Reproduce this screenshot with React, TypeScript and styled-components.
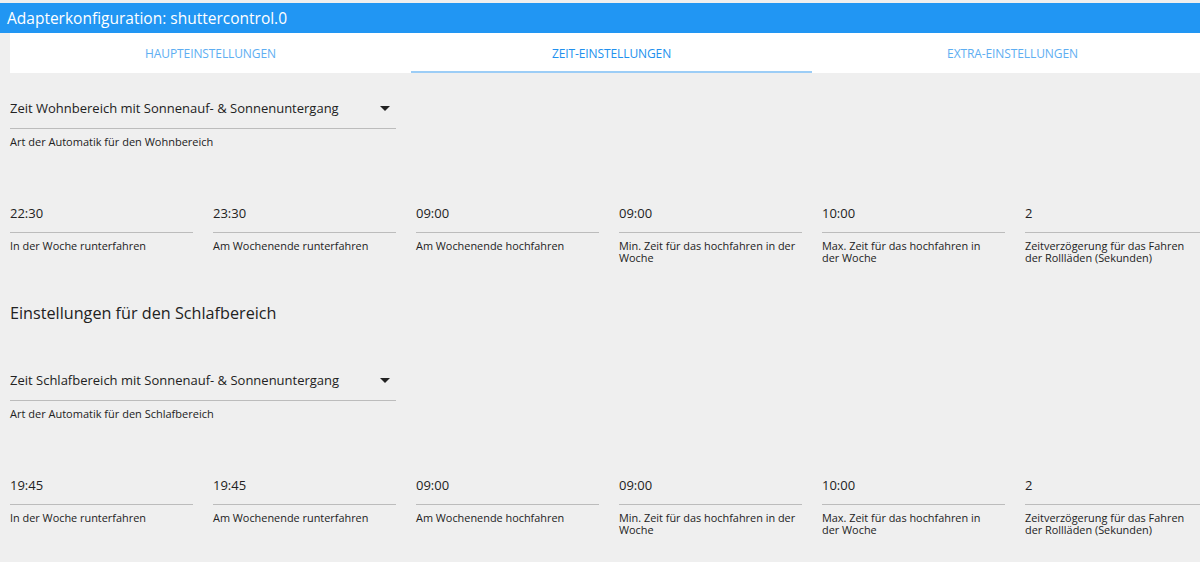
import React from 'react';
import styled, { createGlobalStyle } from 'styled-components';

const GlobalStyle = createGlobalStyle`
  html, body {
    margin: 0;
    padding: 0;
    background: #efefef;
    overflow: hidden;
    font-family: "Open Sans", "Noto Sans", Arial, sans-serif;
    color: rgba(0, 0, 0, 0.87);
  }
`;

const Page = styled.div`
  width: 1200px;
  height: 562px;
  padding-top: 3px;
  box-sizing: border-box;
  overflow: hidden;
`;

const Header = styled.div`
  height: 30px;
  background: #2196f3;
  color: #fff;
  font-size: 15.5px;
  line-height: 30px;
  padding-left: 7px;
  white-space: nowrap;
`;

const TabBar = styled.div`
  display: flex;
  margin-left: 10px;
  width: 1203px;
  height: 40px;
  background: #fff;
`;

const Tab = styled.div<{ active?: boolean }>`
  flex: 0 0 401px;
  display: flex;
  align-items: center;
  justify-content: center;
  box-sizing: border-box;
  font-size: 12px;
  letter-spacing: -0.1px;
  text-transform: uppercase;
  color: ${p => (p.active ? '#2190ee' : '#5eaef2')};
  border-bottom: 2px solid ${p => (p.active ? '#9ccdf6' : 'transparent')};
  padding-top: 2px;
`;

const Content = styled.div`
  padding-left: 10px;
`;

const SelectBlock = styled.div<{ top: number }>`
  width: 386px;
  margin-top: ${p => p.top}px;
`;

const SelectBox = styled.div`
  display: flex;
  align-items: center;
  justify-content: space-between;
  height: 24px;
  padding-bottom: 8px;
  border-bottom: 1px solid #bcbcbc;
  font-size: 13px;
  line-height: 24px;
  color: #222;
`;

const Arrow = styled.svg`
  width: 24px;
  height: 24px;
  margin-right: -1px;
  fill: #222;
`;

const Helper = styled.div`
  margin-top: 6px;
  font-size: 11px;
  line-height: 14px;
  color: #222;
`;

const FieldRow = styled.div`
  display: grid;
  grid-template-columns: repeat(6, 183px);
  column-gap: 20px;
  margin-top: 55px;
`;

const Field = styled.div``;

const Value = styled.div`
  height: 20px;
  line-height: 20px;
  padding-bottom: 9px;
  border-bottom: 1px solid #bcbcbc;
  font-size: 13px;
  color: #222;
  margin-top: -1px;
`;

const Label = styled.div`
  margin-top: 7px;
  font-size: 10.9px;
  line-height: 12px;
  color: #222;
  white-space: pre-line;
`;

const Heading = styled.div`
  margin-top: 37px;
  font-size: 16.2px;
  line-height: 24px;
  color: #222;
`;

type Item = { value: string; label: string };

const labels = [
  'In der Woche runterfahren',
  'Am Wochenende runterfahren',
  'Am Wochenende hochfahren',
  'Min. Zeit für das hochfahren in der\nWoche',
  'Max. Zeit für das hochfahren in\nder Woche',
  'Zeitverzögerung für das Fahren\nder Rollläden (Sekunden)',
];

const wohnFields: Item[] = ['22:30', '23:30', '09:00', '09:00', '10:00', '2'].map((value, i) => ({
  value,
  label: labels[i],
}));

const schlafFields: Item[] = ['19:45', '19:45', '09:00', '09:00', '10:00', '2'].map((value, i) => ({
  value,
  label: labels[i],
}));

const SelectField: React.FC<{ text: string; helper: string; top: number }> = ({ text, helper, top }) => (
  <SelectBlock top={top}>
    <SelectBox>
      <span>{text}</span>
      <Arrow viewBox="0 0 24 24">
        <path d="M7 10l5 5 5-5z" />
      </Arrow>
    </SelectBox>
    <Helper>{helper}</Helper>
  </SelectBlock>
);

const Fields: React.FC<{ items: Item[] }> = ({ items }) => (
  <FieldRow>
    {items.map((f, i) => (
      <Field key={i}>
        <Value>{f.value}</Value>
        <Label>{f.label}</Label>
      </Field>
    ))}
  </FieldRow>
);

const App: React.FC = () => (
  <Page>
    <GlobalStyle />
    <Header>Adapterkonfiguration: shuttercontrol.0</Header>
    <TabBar>
      <Tab>Haupteinstellungen</Tab>
      <Tab active>Zeit-Einstellungen</Tab>
      <Tab>Extra-Einstellungen</Tab>
    </TabBar>
    <Content>
      <SelectField
        top={23}
        text="Zeit Wohnbereich mit Sonnenauf- & Sonnenuntergang"
        helper="Art der Automatik für den Wohnbereich"
      />
      <Fields items={wohnFields} />
      <Heading>Einstellungen für den Schlafbereich</Heading>
      <SelectField
        top={43}
        text="Zeit Schlafbereich mit Sonnenauf- & Sonnenuntergang"
        helper="Art der Automatik für den Schlafbereich"
      />
      <Fields items={schlafFields} />
    </Content>
  </Page>
);

export default App;
